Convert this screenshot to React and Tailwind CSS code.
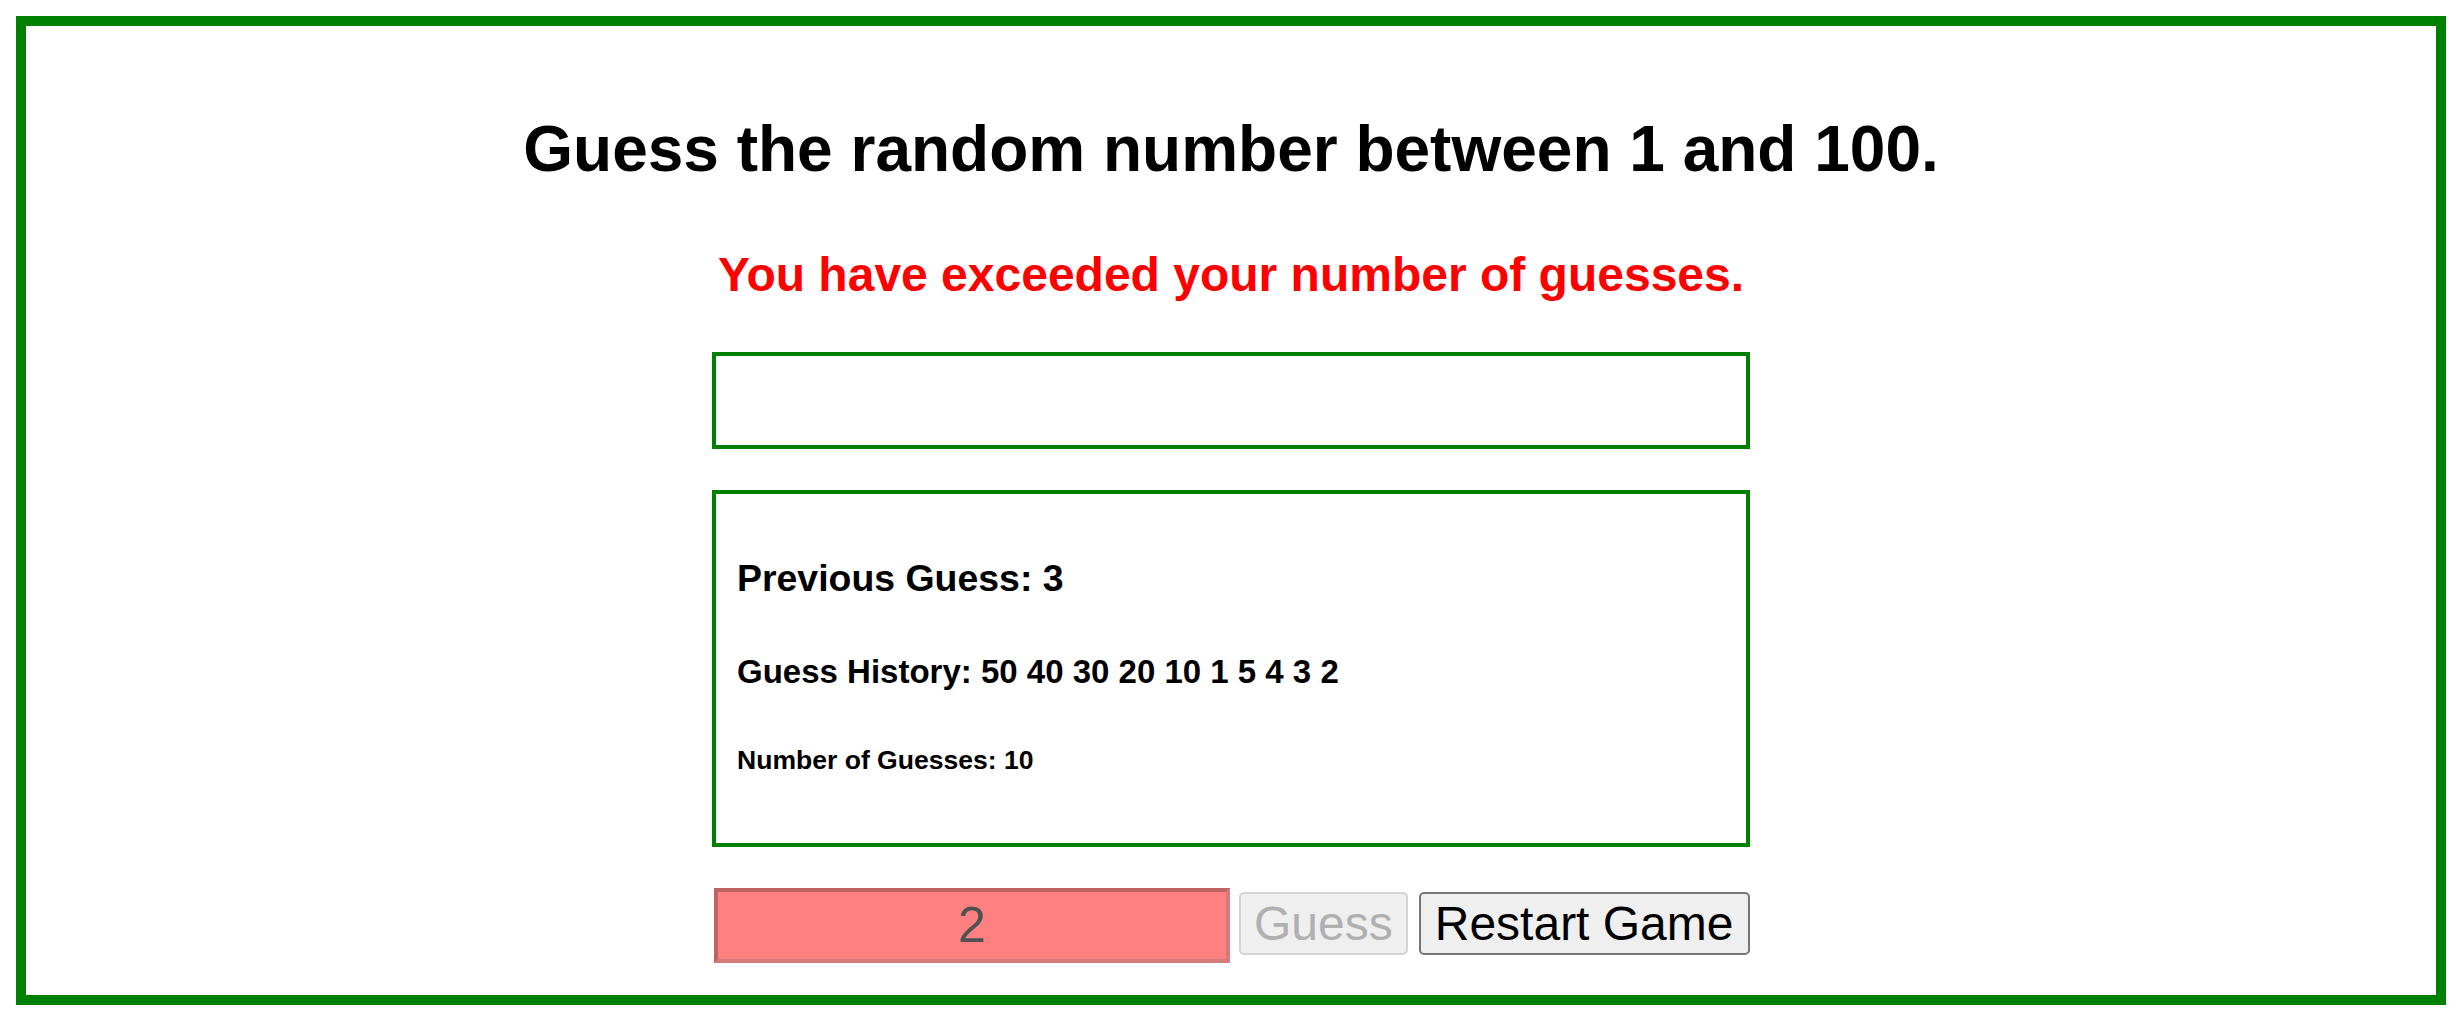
export default function App() {
  const history = [50, 40, 30, 20, 10, 1, 5, 4, 3, 2];

  return (
    <div
      className="m-[16px] border-[10px] border-[#008000] bg-white pt-[32px] pb-[32px] text-black"
      style={{ fontFamily: '"Liberation Sans", Arial, sans-serif' }}
    >
      <h1 className="mt-[43px] text-center text-[64px] leading-[96px] font-bold">
        Guess the random number between 1 and 100.
      </h1>
      <h2 className="mt-[42px] text-center text-[48px] leading-[72px] font-bold text-[#ff0000]">
        You have exceeded your number of guesses.
      </h2>

      <div className="mx-auto mt-[41px] h-[97px] w-[1038px] border-4 border-[#008000]" />

      <div className="mx-auto mt-[41px] w-[1038px] border-4 border-[#008000] px-[21px] pt-[19px] pb-[19px]">
        <h3 className="mt-[37px] text-[37.44px] leading-[56px] font-bold">Previous Guess: 3</h3>
        <h4 className="mt-[42px] text-[33px] leading-[48px] font-bold">
          Guess History: {history.join(' ')}
        </h4>
        <h5 className="mt-[44px] mb-[44px] text-[26.56px] leading-[40px] font-bold">
          Number of Guesses: 10
        </h5>
      </div>

      <div className="mx-auto mt-[41px] flex w-[1038px] items-start">
        <input
          readOnly
          value="2"
          className="ml-[2px] h-[75px] w-[516px] border-4 border-t-[#bf6464] border-l-[#bf6464] border-r-[#d67b7b] border-b-[#d67b7b] bg-[#ff8080] text-center text-[50px] text-[#4f5252] outline-none"
        />
        <button
          disabled
          className="mt-[4px] ml-[9px] h-[63px] rounded-[5px] border-2 border-[#d4d4d4] bg-[#efefef] px-[13px] text-[48px] leading-[55px] text-[#b0b0b0]"
        >
          Guess
        </button>
        <button className="mt-[4px] ml-[11px] h-[63px] rounded-[5px] border-2 border-[#767676] bg-[#efefef] px-[14px] text-[48px] leading-[55px] text-black">
          Restart Game
        </button>
      </div>
    </div>
  );
}
